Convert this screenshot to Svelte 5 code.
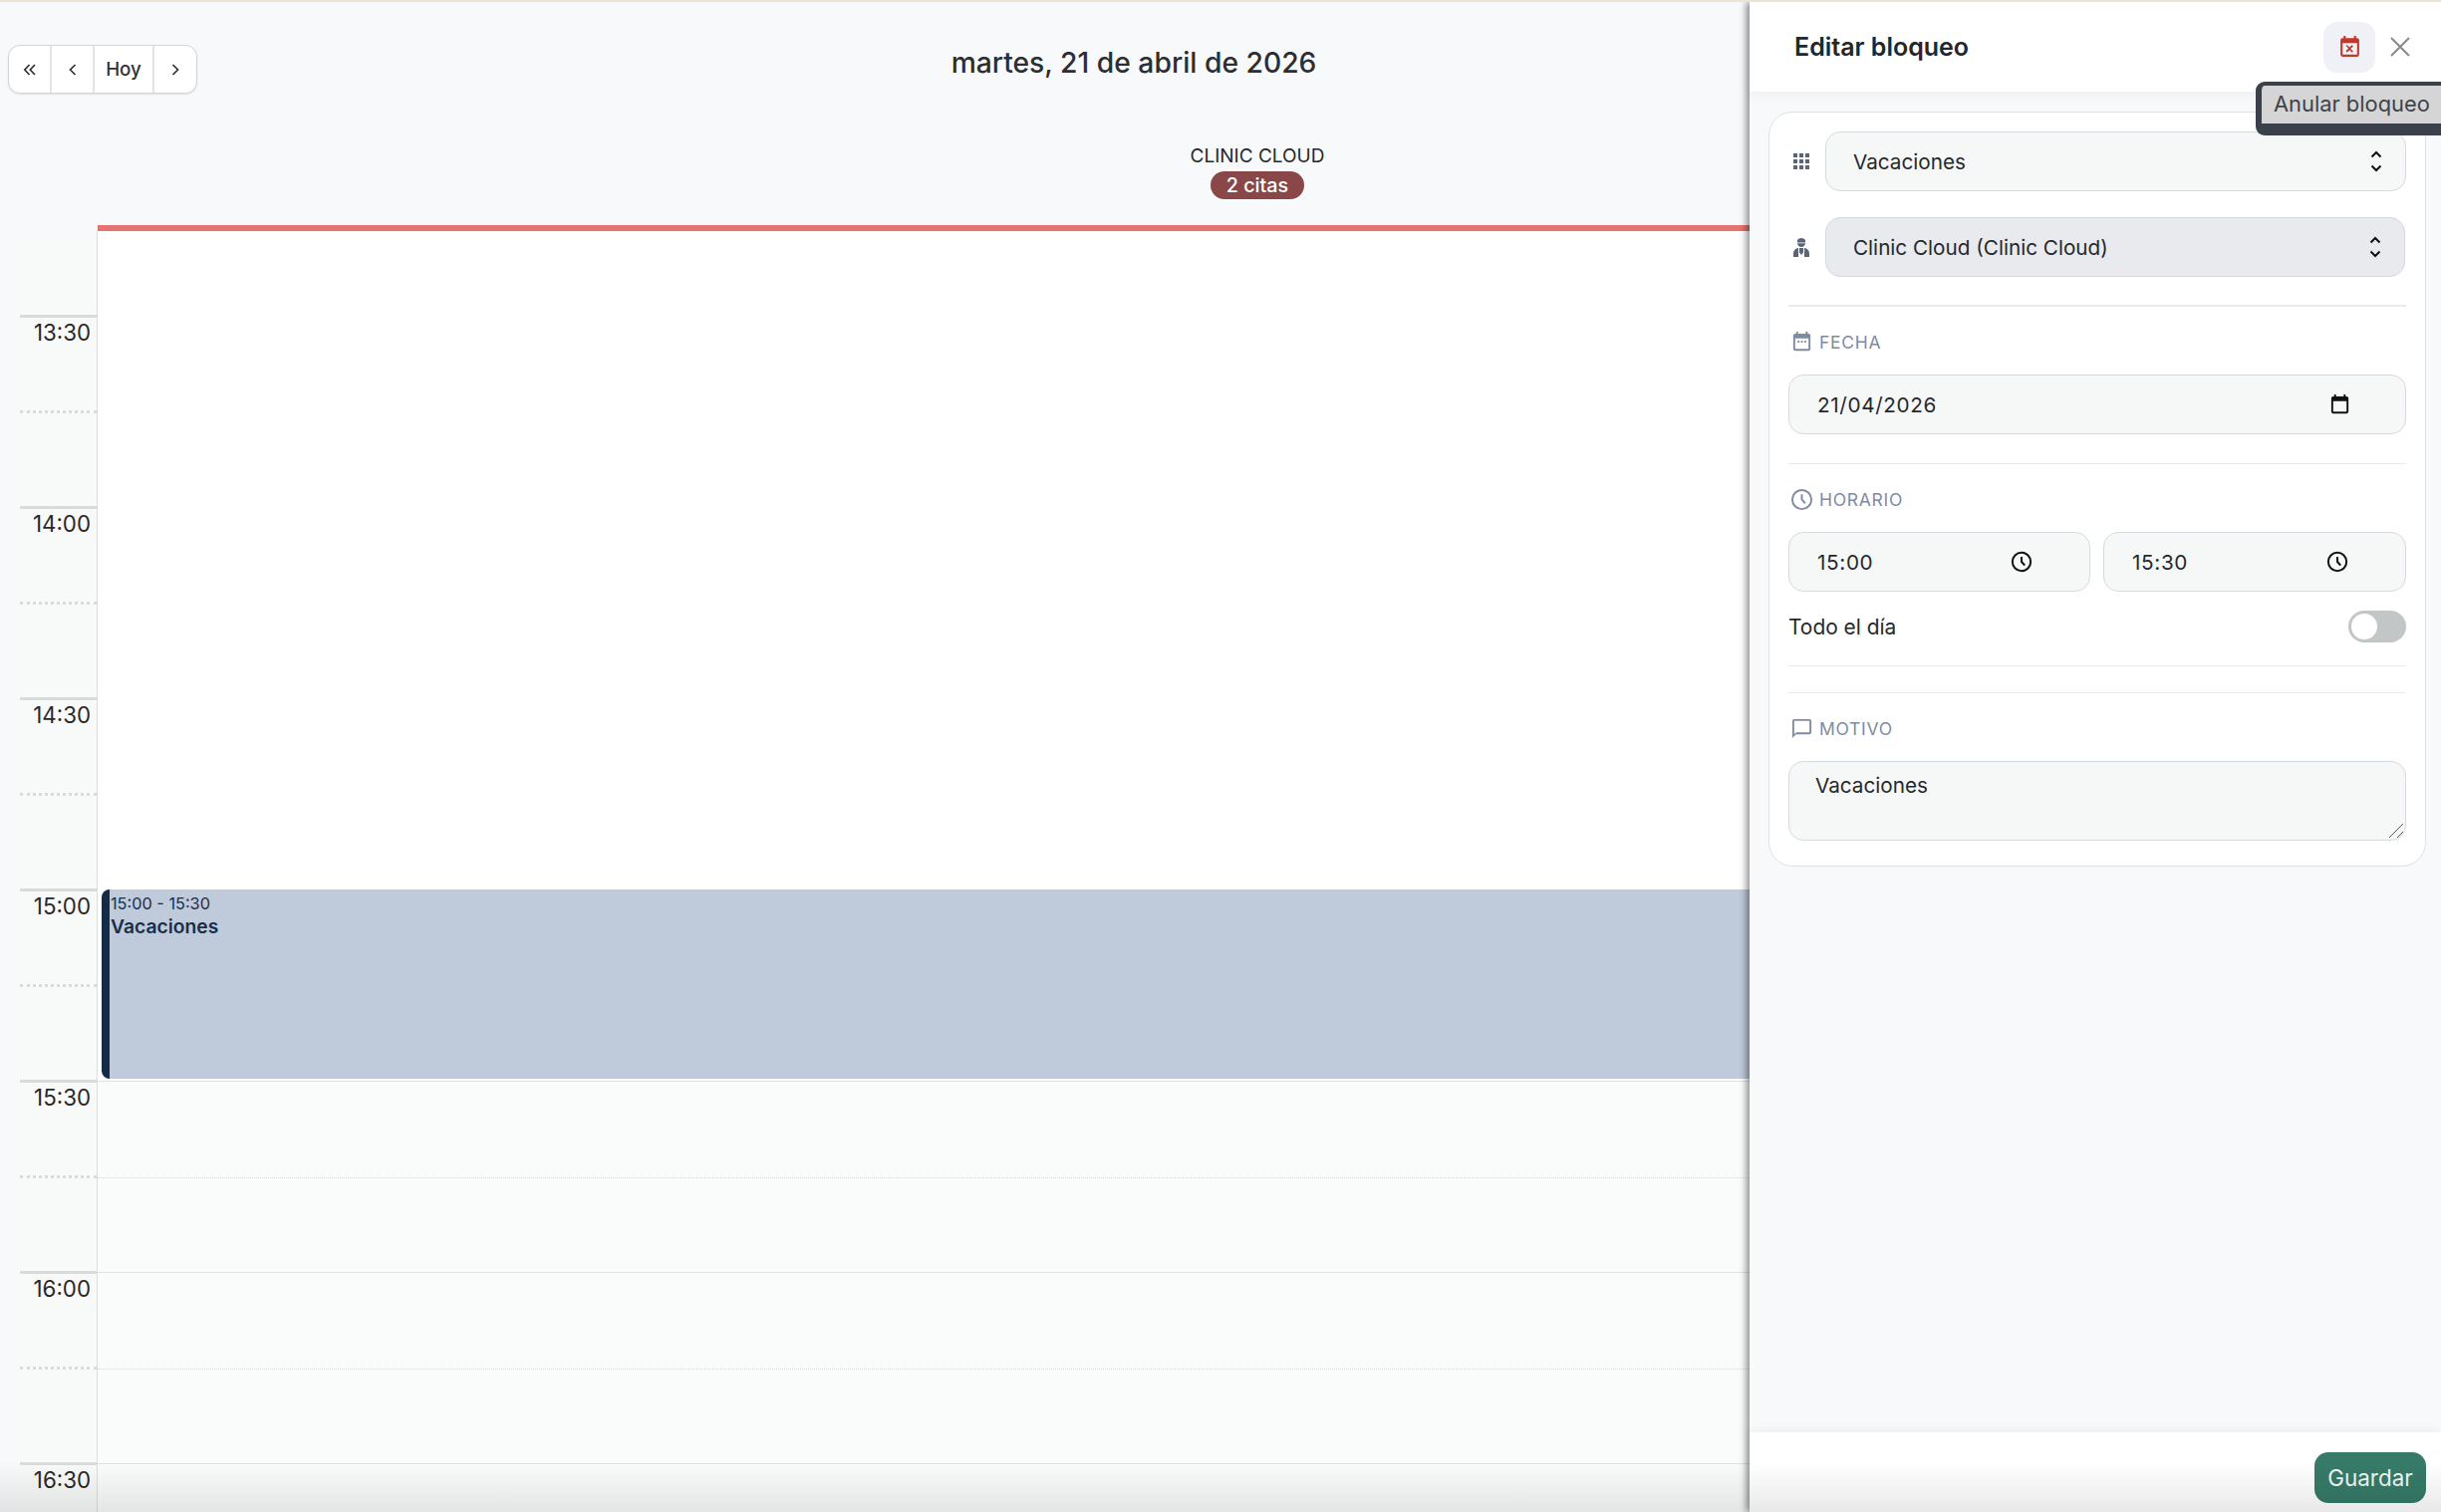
<script>
	const slots = [
		{ time: '13:30', off: false },
		{ time: '14:00', off: false },
		{ time: '14:30', off: false },
		{ time: '15:00', off: false },
		{ time: '15:30', off: true },
		{ time: '16:00', off: true },
		{ time: '16:30', off: true }
	];
	const calPath =
		'M19 3h-1V1h-2v2H8V1H6v2H5c-1.1 0-2 .9-2 2v14c0 1.1.9 2 2 2h14c1.1 0 2-.9 2-2V5c0-1.1-.9-2-2-2zm0 16H5V8h14v11z';
</script>

{#snippet updown()}
	<svg class="updown" viewBox="0 0 12 22" width="12" height="22" fill="none" stroke="#111" stroke-width="2">
		<path d="M1.5 6.5 6 2l4.5 4.5" />
		<path d="M1.5 15.5 6 20l4.5-4.5" />
	</svg>
{/snippet}

{#snippet clock(size, color, width)}
	<svg viewBox="0 0 24 24" width={size} height={size} fill="none" stroke={color} stroke-width={width}>
		<circle cx="12" cy="12" r="10" />
		<path d="M12 6.5V12l3.5 4" />
	</svg>
{/snippet}

<div class="page">
	<main class="calendar">
		<div class="toolbar">
			<div class="nav">
				<button aria-label="Anterior doble">
					<svg viewBox="0 0 14 14" width="14" height="14" fill="none" stroke="#2f3237" stroke-width="1.7"><path d="M6.5 2 1.8 7l4.7 5M12 2 7.3 7l4.7 5" /></svg>
				</button>
				<button aria-label="Anterior">
					<svg viewBox="0 0 14 14" width="14" height="14" fill="none" stroke="#2f3237" stroke-width="1.7"><path d="M9.5 2 4.5 7l5 5" /></svg>
				</button>
				<button class="today">Hoy</button>
				<button aria-label="Siguiente">
					<svg viewBox="0 0 14 14" width="14" height="14" fill="none" stroke="#2f3237" stroke-width="1.7"><path d="M4.5 2l5 5-5 5" /></svg>
				</button>
			</div>
			<h1>martes, 21 de abril de 2026</h1>
			<div class="toolbar-end"></div>
		</div>

		<div class="col-head">
			<div class="col-name">CLINIC CLOUD</div>
			<span class="badge">2 citas</span>
		</div>

		<div class="grid">
			<div class="gutter">
				<div class="lead"></div>
				{#each slots as slot}
					<div class="tick">
						<span>{slot.time}</span>
						<i></i>
					</div>
				{/each}
			</div>
			<div class="column">
				<div class="lead col-lead"></div>
				{#each slots as slot}
					<div class="cell" class:off={slot.off}><i></i></div>
				{/each}
				<div class="event">
					<div class="event-time">15:00 - 15:30</div>
					<div class="event-title">Vacaciones</div>
				</div>
			</div>
		</div>
	</main>

	<aside class="drawer">
		<header>
			<h2>Editar bloqueo</h2>
			<button class="cancel" aria-label="Anular bloqueo">
				<svg viewBox="0 0 24 24" width="25" height="25" fill="#c0392b">
					<path d="M9.31 17l2.44-2.44L14.19 17l1.06-1.06-2.44-2.44 2.44-2.44L14.19 9.5l-2.44 2.44L9.31 9.5l-1.06 1.06 2.44 2.44-2.44 2.44L9.31 17z" />
					<path d={calPath} />
				</svg>
			</button>
			<button class="close" aria-label="Cerrar">
				<svg viewBox="0 0 20 20" width="20" height="20" fill="none" stroke="#858a88" stroke-width="2"><path d="M1 1l18 18M19 1 1 19" /></svg>
			</button>
		</header>

		<div class="tooltip">Anular bloqueo</div>

		<div class="body">
			<div class="card">
				<div class="pick">
					<svg viewBox="0 0 16 16" width="16" height="16" fill="#5a6577">
						<rect x="0" y="0" width="4" height="4" /><rect x="6" y="0" width="4" height="4" /><rect x="12" y="0" width="4" height="4" />
						<rect x="0" y="6" width="4" height="4" /><rect x="6" y="6" width="4" height="4" /><rect x="12" y="6" width="4" height="4" />
						<rect x="0" y="12" width="4" height="4" /><rect x="6" y="12" width="4" height="4" /><rect x="12" y="12" width="4" height="4" />
					</svg>
					<div class="field select">Vacaciones {@render updown()}</div>
				</div>
				<div class="pick second">
					<svg viewBox="0 0 16 19" width="16" height="19" fill="#5a6577">
						<path d="M4 2C4.900.7 6.400 0 8 0s3.100.7 4 2v2.400H4z" />
						<path d="M4 5.200h8C11.800 7.400 10.100 9 8 9S4.200 7.400 4 5.200z" />
						<path d="M0 19v-3.500C0 12.400 2.200 10.500 5 10.100V19zM6 10h4v4.500L8 17l-2-2.500zM11 10.100c2.800.4 5 2.300 5 5.400V19h-5z" />
					</svg>
					<div class="field select dim">Clinic Cloud (Clinic Cloud) {@render updown()}</div>
				</div>

				<hr class="thick" />

				<div class="label">
					<svg viewBox="0 0 24 24" width="23" height="23" fill="#7e8ba3">
						<path d={calPath} /><rect x="7.500" y="10.500" width="2" height="2" /><rect x="11" y="10.500" width="2" height="2" /><rect x="14.500" y="10.500" width="2" height="2" />
					</svg>
					FECHA
				</div>
				<div class="field value">
					21/04/2026
					<svg class="end" viewBox="0 0 24 24" width="23" height="23" fill="#111"><path d={calPath} /></svg>
				</div>

				<hr class="sec-date" />

				<div class="label">
					{@render clock(23, '#7e8ba3', 2)}
					HORARIO
				</div>
				<div class="times">
					<div class="field value">15:00 <span class="end">{@render clock(22, '#111', 2.2)}</span></div>
					<div class="field value">15:30 <span class="end">{@render clock(22, '#111', 2.2)}</span></div>
				</div>
				<div class="allday">
					<span>Todo el día</span>
					<span class="toggle"><b></b></span>
				</div>

				<hr class="sec-a" />
				<hr class="sec-b" />

				<div class="label">
					<svg viewBox="0 0 24 24" width="23" height="23" fill="#7e8ba3"><path d="M20 2H4c-1.100 0-2 .9-2 2v18l4-4h14c1.100 0 2-.9 2-2V4c0-1.100-.9-2-2-2zm0 14H6l-2 2V4h16v12z" /></svg>
					MOTIVO
				</div>
				<div class="field area">
					Vacaciones
					<svg class="grip" viewBox="0 0 16 16" width="16" height="16" fill="none" stroke="#555" stroke-width="1"><path d="M1 15 15 1M9 15l6-6" /></svg>
				</div>
			</div>
		</div>

		<footer>
			<button class="save">Guardar</button>
		</footer>
	</aside>

	<div class="fade"></div>
</div>

<style>
	:global(body) {
		margin: 0;
		background: #f8f9fb;
	}

	* {
		box-sizing: border-box;
	}

	.page {
		position: relative;
		width: 2450px;
		height: 1518px;
		overflow: hidden;
		background: #f8f9fb;
		border-top: 2px solid #e9e4d4;
		font-family: Inter, 'Liberation Sans', sans-serif;
		color: #26282c;
	}

	button {
		font-family: inherit;
		border: 0;
		padding: 0;
		background: none;
	}

	.toolbar {
		display: flex;
		justify-content: space-between;
		align-items: flex-start;
		padding: 43px 8px 0;
	}

	.nav {
		display: flex;
		height: 49px;
		border: 1px solid #d3d5d6;
		border-radius: 12px;
		background: #fff;
		box-shadow: 0 1px 2px rgba(0, 0, 0, 0.1);
		overflow: hidden;
	}

	.nav button {
		display: flex;
		align-items: center;
		justify-content: center;
		width: 43px;
		border-right: 2px solid #e3e4e5;
	}

	.nav button:last-child {
		border-right: 0;
		width: 42px;
	}

	.nav .today {
		width: 60px;
		font-size: 18.75px;
		font-weight: 500;
		color: #2f3237;
	}

	h1 {
		margin: 0;
		font-size: 28.25px;
		line-height: 36px;
		font-weight: 500;
		color: #2b2e33;
	}

	.toolbar-end {
		width: 364px;
	}

	.col-head {
		margin: 48px 24px 0 98px;
		padding-bottom: 26px;
		border-bottom: 6px solid #e5736f;
		text-align: center;
	}

	.col-name {
		font-size: 19px;
		line-height: 28px;
		margin-bottom: 2px;
		padding-top: 1px;
		height: 28px;
	}

	.badge {
		display: block;
		width: 94px;
		height: 28px;
		margin: 0 auto;
		border-radius: 14px;
		background: #8a4748;
		color: #fff;
		font-size: 19.7px;
		font-weight: 500;
		line-height: 28px;
	}

	.grid {
		display: flex;
		margin-left: 20px;
	}

	.gutter {
		width: 78px;
		border-right: 1px solid #dcdddd;
		background: #f8f9f9;
	}

	.lead {
		height: 84px;
	}

	.col-lead {
		height: 85px;
	}

	.tick {
		position: relative;
		height: 192px;
		border-top: 3px solid #d9dbdb;
		padding: 2px 6px 0 0;
		text-align: right;
		font-size: 22.3px;
		line-height: 26px;
	}

	.tick i {
		position: absolute;
		left: 0;
		right: 0;
		top: 93px;
		border-top: 3px dotted #d9dbdb;
	}

	.column {
		position: relative;
		flex: 1;
		background: #fff;
	}

	.cell {
		position: relative;
		height: 192px;
	}

	.cell.off {
		background: #fafcfb;
		border-top: 1px solid #e0e2e2;
	}

	.cell.off i {
		position: absolute;
		left: 0;
		right: 0;
		top: 96px;
		border-top: 1px dotted #d5d7d7;
	}

	.event {
		position: absolute;
		left: 4px;
		right: 0;
		top: 661px;
		height: 190px;
		padding: 5px 0 0 1px;
		background: #bfcadb;
		border-left: 8px solid #152a45;
		border-radius: 8px 0 0 8px;
		color: #1a2e4a;
	}

	.event-time {
		font-size: 16.3px;
		line-height: 18px;
	}

	.event-title {
		margin-top: 2px;
		font-size: 19.3px;
		font-weight: 600;
		line-height: 24px;
	}

	.drawer {
		position: absolute;
		top: 0;
		right: 0;
		bottom: 0;
		width: 694px;
		display: flex;
		flex-direction: column;
		background: #f8f9fb;
		box-shadow: -3px 0 7px rgba(0, 0, 0, 0.45);
	}

	header {
		display: flex;
		align-items: center;
		height: 90px;
		padding: 0 16px 0 45px;
		background: #fff;
		box-shadow: 0 2px 12px rgba(0, 0, 0, 0.05);
	}

	h2 {
		flex: 1;
		margin: 0;
		font-size: 25px;
		font-weight: 600;
		color: #23262a;
	}

	.cancel {
		display: flex;
		align-items: center;
		justify-content: center;
		width: 52px;
		height: 51px;
		border-radius: 14px;
		background: #f0f1f6;
	}

	.close {
		display: flex;
		align-items: center;
		justify-content: center;
		width: 50px;
		height: 50px;
	}

	.tooltip {
		position: absolute;
		z-index: 2;
		top: 80px;
		left: 508px;
		width: 200px;
		height: 54px;
		padding-left: 12px;
		border-style: solid;
		border-color: #3a414b;
		border-width: 4px 0 12px 6px;
		border-radius: 9px;
		background: #d5d5d5;
		color: #3f434a;
		font-size: 21.875px;
		line-height: 36px;
	}

	.body {
		flex: 1;
		padding: 20px 15px 0 19px;
	}

	.card {
		height: 758px;
		padding: 19px 19px 0;
		border: 1px solid #dfe1e5;
		border-radius: 24px;
		background: #fff;
	}

	.pick {
		display: flex;
		align-items: center;
		gap: 16px;
		padding-left: 5px;
	}

	.pick.second {
		margin-top: 26px;
	}

	.field {
		position: relative;
		display: flex;
		align-items: center;
		height: 60px;
		padding-left: 27px;
		border: 1px solid #d5d9e0;
		border-radius: 15px;
		background: #f6f8f7;
		font-size: 20.7px;
		color: #26282c;
	}

	.value {
		padding-left: 28px;
		letter-spacing: 0.65px;
	}

	.select {
		flex: 1;
	}

	.select.dim {
		margin-right: 1px;
		background: #e8eaee;
	}

	.updown {
		position: absolute;
		right: 23px;
		top: 18px;
	}

	.end {
		position: absolute;
		display: flex;
		right: 54px;
		top: 18px;
	}

	.times .end {
		right: 57px;
		top: 18px;
	}

	hr {
		margin: 0;
		border: 0;
		border-top: 1px solid #e8eaec;
	}

	hr.thick {
		margin-top: 28px;
		border-top-width: 2px;
	}

	hr.sec-date {
		margin-top: 29px;
	}

	hr.sec-a {
		margin-top: 23px;
	}

	hr.sec-b {
		margin-top: 26px;
	}

	.label {
		display: flex;
		align-items: center;
		gap: 6px;
		height: 24px;
		margin: 23px 0 21px 2px;
		font-size: 17.5px;
		letter-spacing: 0.7px;
		color: #7e8ba3;
	}

	.times {
		display: grid;
		grid-template-columns: 303px 304px;
		gap: 13px;
	}

	.allday {
		display: flex;
		justify-content: space-between;
		align-items: center;
		height: 32px;
		margin-top: 19px;
		font-size: 20.9px;
	}

	.toggle {
		width: 58px;
		height: 32px;
		padding: 3px;
		border-radius: 16px;
		background: #c3c6c6;
	}

	.toggle b {
		display: block;
		width: 26px;
		height: 26px;
		border-radius: 50%;
		background: #fff;
	}

	.area {
		align-items: flex-start;
		height: 80px;
		padding: 11px 0 0 26px;
	}

	.grip {
		position: absolute;
		right: 1px;
		bottom: 1px;
	}

	footer {
		display: flex;
		justify-content: flex-end;
		height: 80px;
		padding: 20px 15px 0 0;
		background: #fff;
		box-shadow: 0 -2px 10px rgba(0, 0, 0, 0.05);
	}

	.save {
		width: 112px;
		height: 51px;
		border-radius: 14px;
		background: #367a67;
		color: #f1f6f4;
		font-size: 22.4px;
	}

	.fade {
		position: absolute;
		left: 0;
		right: 0;
		bottom: 0;
		height: 50px;
		background: linear-gradient(rgba(0, 0, 0, 0), rgba(0, 0, 0, 0.09));
		pointer-events: none;
	}
</style>
